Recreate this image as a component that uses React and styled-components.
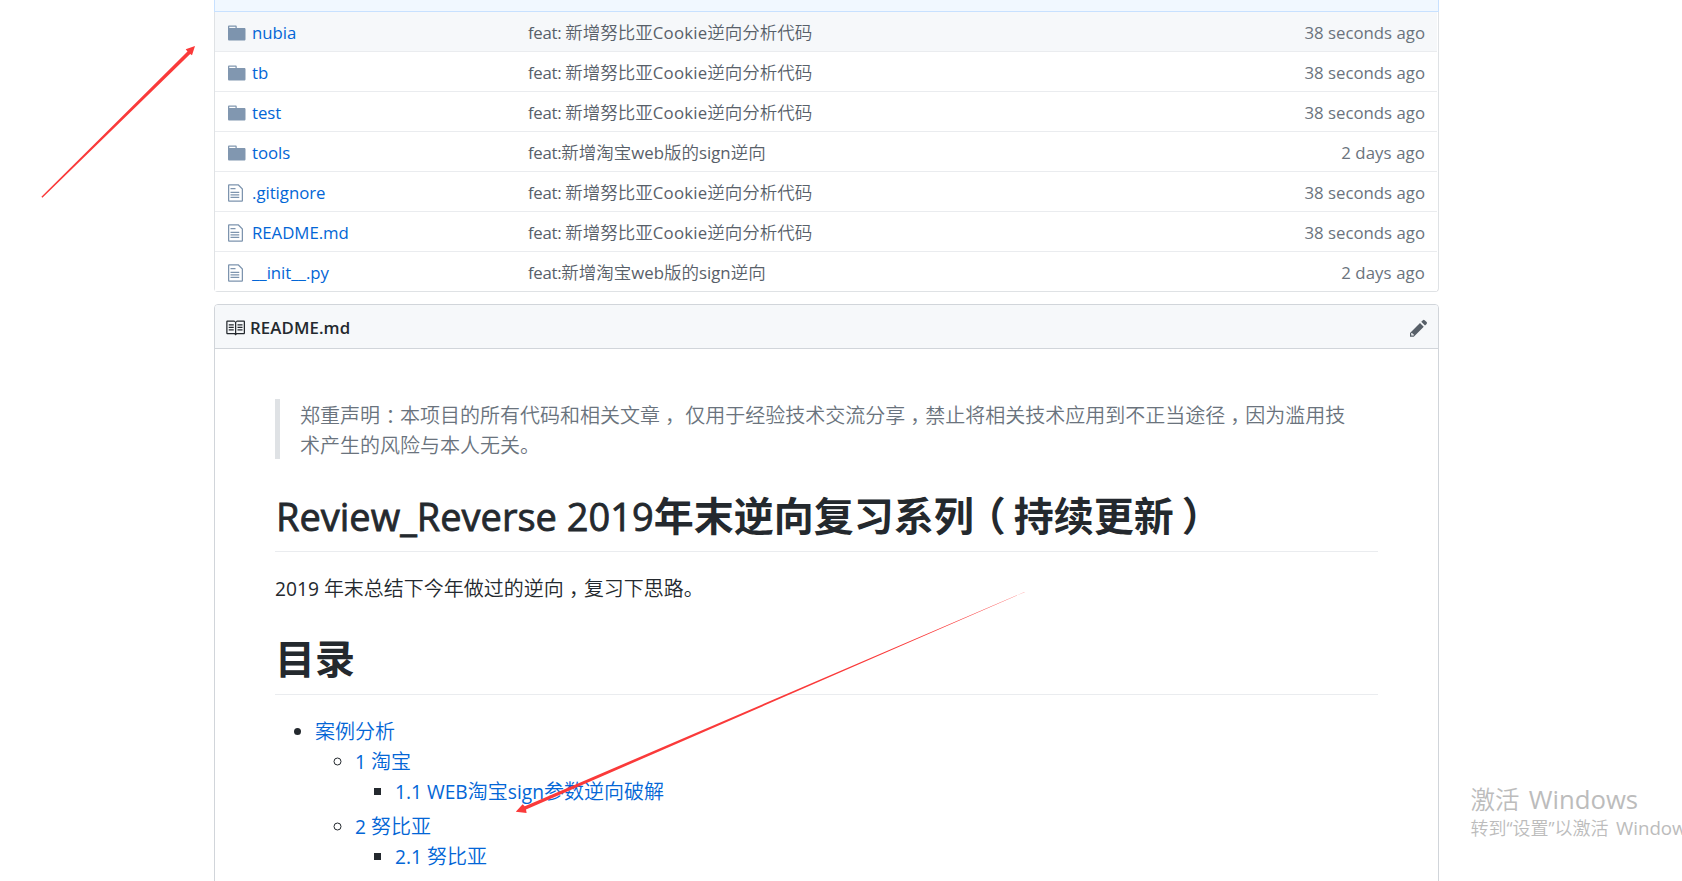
import React from "react";
import styled, { createGlobalStyle } from "styled-components";

const Global = createGlobalStyle`
  * { box-sizing: border-box; }
  html, body { margin: 0; background: #fff; }
  body {
    width: 1682px;
    height: 881px;
    overflow: hidden;
    font-family: "Open Sans", "Noto Sans CJK SC", sans-serif;
    font-weight: 350;
    color: #24292e;
  }
`;

const Page = styled.div`
  position: relative;
  width: 1682px;
  height: 881px;
  overflow: hidden;
  padding-left: 214px;
`;

const Column = styled.main`
  width: 1225px;
`;

const CommitBar = styled.div`
  height: 12px;
  background: #f1f8ff;
  border: 1px solid #c8e1ff;
  border-top: 0;
`;

const FileTable = styled.div`
  border: 1px solid #dfe2e5;
  border-top: 0;
  border-radius: 0 0 4px 4px;
  padding-right: 1px;
`;

const FileRow = styled.div`
  display: flex;
  align-items: center;
  height: 40px;
  padding: 2px 12px 0 13px;
  background: ${(p) => (p.$active ? "#f6f8fa" : "#fff")};
  border-bottom: 1px solid #eaecef;
  font-size: 17.5px;
  line-height: 24px;
  white-space: nowrap;

  &:last-child {
    height: 39px;
    border-bottom: 0;
  }
`;

const FileIcon = styled.span`
  display: flex;
  width: 24px;
  padding-top: 1px;
  color: ${(p) => (p.$folder ? "rgba(3, 47, 98, 0.5)" : "#7d94ae")};
`;

const FileName = styled.a`
  width: 276px;
  color: #0366d6;
`;

const Message = styled.span`
  flex: 1;
  color: #586069;
`;

const Age = styled.span`
  color: #6a737d;
`;

const Latin = styled.span`
  font-size: ${(p) => p.$size || 0.96}em;
  font-weight: ${(p) => p.$weight || 400};
  letter-spacing: ${(p) => p.$track || 0}px;
  padding-left: ${(p) => p.$gap || 0}px;
`;

const Readme = styled.section`
  height: 600px;
  margin-top: 12px;
  border: 1px solid #d1d5da;
  border-radius: 4px;
`;

const ReadmeHeader = styled.header`
  display: flex;
  align-items: center;
  height: 44px;
  padding: 2px 10.5px 0 10px;
  background: #f6f8fa;
  border-bottom: 1px solid #d1d5da;
  border-radius: 3px 3px 0 0;
`;

const ReadmeTitle = styled.h3`
  flex: 1;
  margin: 0 0 0 5px;
  font-size: 17.5px;
  line-height: 24px;
  font-weight: 600;
`;

const EditIcon = styled.span`
  display: flex;
  padding-top: 1px;
  color: #586069;
`;

const Article = styled.article`
  padding: 50px 60px;
  font-size: 20px;
  line-height: 30px;
`;

const Quote = styled.blockquote`
  margin: 0;
  padding: 1.5px 20px 0;
  height: 60px;
  color: #6a737d;
  border-left: 5px solid #dfe2e5;
`;

const Heading = styled.h1`
  height: 63px;
  margin: 30px 0 20px;
  padding-top: 1.5px;
  border-bottom: 1px solid #eaecef;
  font-size: 40px;
  line-height: 50px;
  font-weight: 700;
  white-space: pre;
`;

const HeadingLatin = styled.span`
  font-size: 0.95em;
  font-weight: 400;
  padding-left: 1px;
  -webkit-text-stroke: 0.8px currentColor;
`;

const Paragraph = styled.p`
  height: 30px;
  margin: 0;
  padding-top: 1.5px;
`;

const List = styled.ul`
  margin: 0;
  padding-left: 40px;
`;

const Contents = styled(List)`
  padding-top: 1.5px;
`;

const Item = styled.li`
  line-height: 30px;

  & + & {
    margin-top: 5px;
  }
`;

const ItemLink = styled.a`
  display: inline-block;
  height: 30px;
  vertical-align: top;
  color: #0366d6;
`;

/* Full-width punctuation centred in its cell */
const Mark = styled.span`
  padding-left: ${(p) => p.$shift}em;
  letter-spacing: ${(p) => -p.$shift}em;
`;

const Tight = styled.span`
  letter-spacing: -0.2em;
`;

const OpenParen = styled.span`
  padding-right: 0.2em;
`;

const Arrows = styled.svg`
  position: absolute;
  inset: 0;
  pointer-events: none;
`;

const Activation = styled.aside`
  position: absolute;
  left: 1470.5px;
  top: 783px;
  color: #bcbcbc;
  white-space: nowrap;
`;

const ActivationTitle = styled.div`
  font-size: 24.5px;
  line-height: 34px;
`;

const ActivationText = styled.div`
  font-size: 18px;
  line-height: 21px;
`;

const FolderIcon = () => (
  <svg width="17.5" height="20" viewBox="0 0 14 16" fill="currentColor">
    <path d="M13 4H7V3c0-.66-.31-1-1-1H1c-.55 0-1 .45-1 1v10c0 .55.45 1 1 1h12c.55 0 1-.45 1-1V5c0-.55-.45-1-1-1zM6 4H1V3h5v1z" />
  </svg>
);

const DocIcon = () => (
  <svg width="15" height="20" viewBox="0 0 12 16" fill="currentColor">
    <path d="M6 5H2V4h4v1zM2 8h7V7H2v1zm0 2h7V9H2v1zm0 2h7v-1H2v1zm10-7.5V14c0 .55-.45 1-1 1H1c-.55 0-1-.45-1-1V2c0-.55.45-1 1-1h7.5L12 4.5zM11 5L8 2H1v12h10V5z" />
  </svg>
);

const BookIcon = () => (
  <svg width="20" height="20" viewBox="0 0 16 16" fill="currentColor">
    <path d="M3 5h4v1H3V5zm0 3h4V7H3v1zm0 2h4V9H3v1zm11-5h-4v1h4V5zm0 2h-4v1h4V7zm0 2h-4v1h4V9zm2-6v9c0 .55-.45 1-1 1H9.5l-1 1-1-1H2c-.55 0-1-.45-1-1V3c0-.55.45-1 1-1h5.5l1 1 1-1H15c.55 0 1 .45 1 1zm-8 .5L7.5 3H2v9h6V3.5zm7-.5H9.5l-.5.5V12h6V3z" />
  </svg>
);

const PencilIcon = () => (
  <svg width="17.5" height="20" viewBox="0 0 14 16" fill="currentColor">
    <path d="M0 12v3h3l8-8-3-3-8 8zm3 2H1v-2h1v1h1v1zm10.3-9.3L12 6 9 3l1.3-1.3a.996.996 0 0 1 1.41 0l1.59 1.59c.39.39.39 1.02 0 1.41z" />
  </svg>
);

const CookieMessage = () => (
  <Message>
    <Latin $track={-0.3}>feat: </Latin>新增努比亚<Latin $track={0.2}>Cookie</Latin>逆向分析代码
  </Message>
);

const SignMessage = () => (
  <Message>
    <Latin $track={-0.3}>feat:</Latin>新增淘宝<Latin>web</Latin>版的<Latin>sign</Latin>逆向
  </Message>
);

const files = [
  { name: "nubia", folder: true, recent: true, active: true },
  { name: "tb", folder: true, recent: true },
  { name: "test", folder: true, recent: true },
  { name: "tools", folder: true },
  { name: ".gitignore", recent: true },
  { name: "README.md", recent: true },
  { name: "__init__.py" },
];

export default function App() {
  return (
    <Page>
      <Global />
      <Column>
        <CommitBar />
        <FileTable>
          {files.map((f) => (
            <FileRow key={f.name} $active={f.active}>
              <FileIcon $folder={f.folder}>{f.folder ? <FolderIcon /> : <DocIcon />}</FileIcon>
              <FileName><Latin $track={-0.03}>{f.name}</Latin></FileName>
              {f.recent ? <CookieMessage /> : <SignMessage />}
              <Age>{f.recent ? <Latin>38 seconds ago</Latin> : <Latin $track={0.1}>2 days ago</Latin>}</Age>
            </FileRow>
          ))}
        </FileTable>
        <Readme>
          <ReadmeHeader>
            <BookIcon />
            <ReadmeTitle><Latin $weight={600} $track={0.1}>README.md</Latin></ReadmeTitle>
            <EditIcon><PencilIcon /></EditIcon>
          </ReadmeHeader>
          <Article>
            <Quote>
              郑重声明<Mark $shift={0.28}>：</Mark>本项目的所有代码和相关文章<Mark $shift={0.25}>，</Mark> 仅用于经验技术交流分享<Mark $shift={0.25}>，</Mark>禁止将相关技术应用到不正当途径<Mark $shift={0.25}>，</Mark>因为滥用技术产生的风险与本人无关。
            </Quote>
            <Heading>
              <HeadingLatin>Review_Reverse 2019</HeadingLatin>年末逆向复习系<Tight>列</Tight><OpenParen>（</OpenParen>持续更新<Mark $shift={0.2}>）</Mark>
            </Heading>
            <Paragraph>
              <Latin>2019 </Latin>年末总结下今年做过的逆向<Mark $shift={0.25}>，</Mark>复习下思路。
            </Paragraph>
            <Heading>目录</Heading>
            <Contents>
              <Item>
                <ItemLink>案例分析</ItemLink>
                <List>
                  <Item>
                    <ItemLink><Latin>1 </Latin>淘宝</ItemLink>
                    <List>
                      <Item>
                        <ItemLink><Latin>1.1 WEB</Latin>淘宝<Latin>sign</Latin>参数逆向破解</ItemLink>
                      </Item>
                    </List>
                  </Item>
                  <Item>
                    <ItemLink><Latin>2 </Latin>努比亚</ItemLink>
                    <List>
                      <Item>
                        <ItemLink><Latin>2.1 </Latin>努比亚</ItemLink>
                      </Item>
                    </List>
                  </Item>
                </List>
              </Item>
            </Contents>
          </Article>
        </Readme>
      </Column>
      <Arrows width="1682" height="881" viewBox="0 0 1682 881" fill="#fa3a3a">
        <path d="M41.4 196.7L187.5 51.4L185.7 49.3L195 46L192 55.3L190.2 54L42.4 197.7Z" />
        <path d="M1024.5 592L524.8 806.3L522.6 804.2L515.8 811.8L526.6 813L526 809.4L1024.5 592.15Z" />
      </Arrows>
      <Activation>
        <ActivationTitle>激活<Latin $size={1.05} $gap={2.5}> Windows</Latin></ActivationTitle>
        <ActivationText>转到<Latin>“</Latin>设置<Latin>”</Latin>以激活<Latin $size={1.04} $gap={2.5}> Windows</Latin>。</ActivationText>
      </Activation>
    </Page>
  );
}
